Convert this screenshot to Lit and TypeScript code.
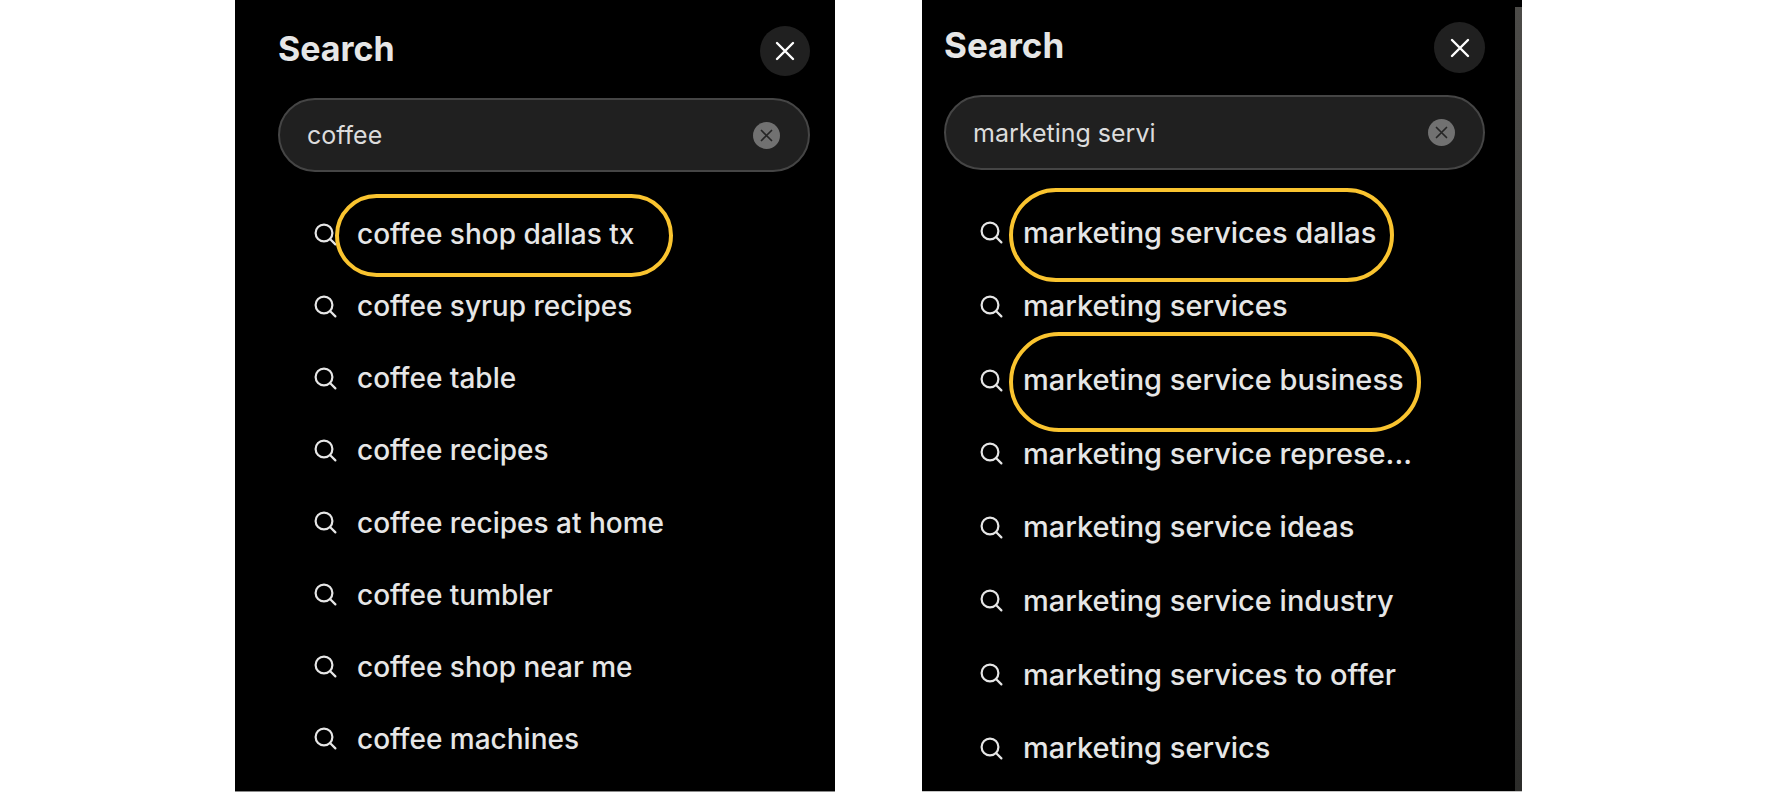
import { LitElement, html, css, nothing } from "lit";
import { customElement, property } from "lit/decorators.js";
import { classMap } from "lit/directives/class-map.js";

interface Suggestion {
  text: string;
  ring?: "snug" | "tall" | "grand";
}

@customElement("search-panel")
class SearchPanel extends LitElement {
  @property() query = "";
  @property({ attribute: false }) suggestions: Suggestion[] = [];
  @property({ type: Boolean, reflect: true }) large = false;

  static styles = css`
    :host {
      box-sizing: border-box;
      display: flex;
      flex-direction: column;
      min-width: 0;
      min-height: calc(100vh - 2px);
      padding: 26px 25px 16px 43px;
      border-bottom: 1px solid #8a8a8a;
      background: #000;
      color: #e6e6e6;
      --close: 50px;
      --field: 74px;
      --title-size: 34px;
      --item-size: 28px;
    }
    :host([large]) {
      padding: 22px 37px 6px 22px;
      border-bottom-color: #c4c4c4;
      background: linear-gradient(#000 7px, #4c4b48 7px, #2c2c2a) right / 7px 100% no-repeat #000;
      --close: 51px;
      --field: 75px;
      --title-size: 35px;
      --item-size: 29px;
    }
    .header {
      display: flex;
      justify-content: space-between;
      align-items: flex-start;
    }
    .title {
      margin: 0;
      font-size: var(--title-size);
      line-height: 46px;
      font-weight: 700;
    }
    button {
      display: block;
      border: 0;
      padding: 0;
      font: inherit;
      cursor: pointer;
    }
    svg {
      display: block;
      fill: none;
      stroke: currentColor;
      stroke-linecap: round;
    }
    .close {
      width: var(--close);
      height: var(--close);
      border-radius: 50%;
      background: #202020;
      color: #fff;
    }
    .close svg {
      margin: auto;
    }
    .field {
      box-sizing: border-box;
      display: flex;
      align-items: center;
      height: var(--field);
      margin: 22px 0 26px;
      padding: 0 28px 0 27px;
      border: 2px solid #454545;
      border-radius: 38px;
      background: #202020;
    }
    input {
      flex: 1;
      min-width: 0;
      border: 0;
      padding: 0;
      outline: 0;
      background: none;
      color: #dcdcdc;
      font: 400 25px / 32px Inter, sans-serif;
    }
    .clear {
      width: 27px;
      height: 27px;
      border-radius: 50%;
      background: #717171;
      color: #252525;
    }
    .list {
      flex: 1;
      display: grid;
      grid-auto-rows: 1fr;
      margin: 0;
      padding: 0 0 0 36px;
      list-style: none;
    }
    .item {
      display: flex;
      align-items: center;
      min-width: 0;
    }
    .suggestion {
      display: flex;
      align-items: center;
      gap: 20px;
      background: none;
      color: inherit;
      text-align: left;
    }
    .label {
      position: relative;
      font-size: var(--item-size);
      line-height: 36px;
      font-weight: 500;
      white-space: nowrap;
    }
    .ring {
      position: absolute;
      border: 4px solid #fac42f;
      border-radius: 50px;
      pointer-events: none;
    }
    .snug {
      inset: -22px -39px -25px -22px;
    }
    .tall {
      inset: -27px -18px -31px -14px;
    }
    .grand {
      inset: -30px -17px -34px -14px;
    }
  `;

  render() {
    return html`
      <header class="header">
        <h1 class="title">Search</h1>
        <button class="close" type="button" aria-label="Close search">
          <svg width="20" height="20" viewBox="0 0 20 20" stroke-width="2.4">
            <path d="M2 2 18 18M18 2 2 18" />
          </svg>
        </button>
      </header>
      <div class="field">
        <input type="text" aria-label="Search" .value=${this.query} />
        <button class="clear" type="button" aria-label="Clear search">
          <svg width="27" height="27" viewBox="0 0 27 27" stroke-width="1.7">
            <path d="M8.5 8.5 18.5 18.5M18.5 8.5 8.5 18.5" />
          </svg>
        </button>
      </div>
      <ul class="list">
        ${this.suggestions.map(
          (s) => html`<li class="item">
            <button class="suggestion" type="button">
              <svg width="23" height="23" viewBox="0 0 23 23" stroke-width="2.2">
                <circle cx="10" cy="10" r="8.4" />
                <path d="M16 16 21.4 21.4" />
              </svg>
              <span class="label">${s.text}${s.ring
                ? html`<span class=${classMap({ ring: true, [s.ring]: true })}></span>`
                : nothing}</span>
            </button>
          </li>`
        )}
      </ul>
    `;
  }
}

@customElement("app-root")
class AppRoot extends LitElement {
  static styles = css`
    :host {
      display: grid;
      grid-template-columns: 235fr 600fr 87fr 600fr 259fr;
      background: #fff;
      font-family: Inter, sans-serif;
    }
    .first {
      grid-column: 2;
    }
    .second {
      grid-column: 4;
    }
  `;

  private coffee: Suggestion[] = [
    { text: "coffee shop dallas tx", ring: "snug" },
    { text: "coffee syrup recipes" },
    { text: "coffee table" },
    { text: "coffee recipes" },
    { text: "coffee recipes at home" },
    { text: "coffee tumbler" },
    { text: "coffee shop near me" },
    { text: "coffee machines" },
  ];

  private marketing: Suggestion[] = [
    { text: "marketing services dallas", ring: "tall" },
    { text: "marketing services" },
    { text: "marketing service business", ring: "grand" },
    { text: "marketing service represe..." },
    { text: "marketing service ideas" },
    { text: "marketing service industry" },
    { text: "marketing services to offer" },
    { text: "marketing servics" },
  ];

  render() {
    return html`
      <search-panel class="first" query="coffee" .suggestions=${this.coffee}></search-panel>
      <search-panel class="second" large query="marketing servi" .suggestions=${this.marketing}></search-panel>
    `;
  }
}
